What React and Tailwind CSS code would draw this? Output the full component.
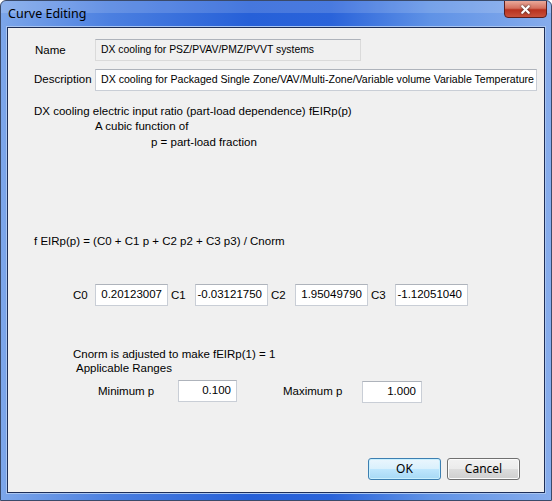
import { X } from 'lucide-react';

const font = { fontFamily: '"Liberation Sans", Arial, sans-serif' };

function Field({ value, className = '', align = 'left', disabled = false }) {
    return (
        <div
            className={`h-[22px] flex items-center px-[5px] border border-[#c9ced6] border-t-[#aeb3bb] text-black overflow-hidden ${
                disabled ? 'bg-[#f0f0f0]' : 'bg-white'
            } ${align === 'right' ? 'justify-end' : ''} ${className}`}
        >
            <span className="whitespace-nowrap">{value}</span>
        </div>
    );
}

function Coef({ label, value, labelW }) {
    return (
        <div className="flex items-center">
            <span className={`${labelW} text-[11.5px] pt-[2px]`}>{label}</span>
            <Field value={value} align="right" className="w-[73px] text-[11.5px]" />
        </div>
    );
}

export default function App() {
    return (
        <div className="w-[552px] h-[501px] bg-white" style={font}>
            <div className="w-[552px] h-[501px] flex flex-col rounded-t-[6px] border border-[#3a4a6a] bg-[linear-gradient(90deg,#7ca6ea_0%,#4b7fe0_20%,#2660d8_45%,#2a63da_60%,#5f92e6_78%,#86acec_100%)] overflow-hidden">
                {/* title bar */}
                <div className="h-[26px] flex items-start justify-between relative">
                    <div className="absolute inset-x-0 top-0 h-[12px] bg-white/15" />
                    <span className="ml-[7px] mt-[4px] text-[12.5px] text-black relative" style={{ fontFamily: '"Noto Sans", sans-serif' }}>
                        Curve Editing
                    </span>
                    <div className="relative mr-[4px] w-[43px] h-[18px] -mt-px rounded-b-[4px] border border-[#5a1f1f] bg-[linear-gradient(180deg,#e9a99a_0%,#d4705e_45%,#b8321f_55%,#c8513c_100%)] flex items-center justify-center">
                        <X size={13} strokeWidth={4} className="text-white drop-shadow-[0_0_1px_#333]" />
                    </div>
                </div>
                {/* body */}
                <div className="flex flex-1 px-[6px] pb-[7px]">
                    <div className="flex-1 border border-[#1d2e58] bg-[#f0f0f0] text-black text-[11.5px] outline outline-1 outline-[#a8c4f0]">
                        <div className="flex flex-col">
                            <div className="flex items-center mt-[11px] h-[22px]">
                                <span className="ml-[27px] w-[60px] pt-[2px]">Name</span>
                                <Field value="DX cooling for PSZ/PVAV/PMZ/PVVT systems" disabled className="w-[266px] border-[#dadada] text-[10.4px]" />
                            </div>
                            <div className="flex items-center mt-[8px] h-[22px]">
                                <span className="ml-[26px] w-[61px]">Description</span>
                                <Field value="DX cooling for Packaged Single Zone/VAV/Multi-Zone/Variable volume Variable Temperature" className="w-[442px] text-[10.6px]" />
                            </div>
                            <div className="mt-[13px] ml-[26px] h-[15px] leading-[15px]">DX cooling electric input ratio (part-load dependence) fEIRp(p)</div>
                            <div className="ml-[87px] h-[15px] leading-[15px]">A cubic function of</div>
                            <div className="ml-[143px] h-[16px] leading-[16px]">p = part-load fraction</div>
                            <div className="mt-[83px] ml-[26px] h-[16px] leading-[16px]">f EIRp(p) = (C0 + C1 p + C2 p2 + C3 p3) / Cnorm</div>
                            <div className="mt-[35px] ml-[65px] flex gap-[3px]">
                                <Coef label="C0" value="0.20123007" labelW="w-[22px]" />
                                <Coef label="C1" value="-0.03121750" labelW="w-[24px]" />
                                <Coef label="C2" value="1.95049790" labelW="w-[24px]" />
                                <Coef label="C3" value="-1.12051040" labelW="w-[24px]" />
                            </div>
                            <div className="mt-[41px] ml-[65px] h-[14px] leading-[14px]">Cnorm is adjusted to make fEIRp(1) = 1</div>
                            <div className="ml-[68px] h-[14px] leading-[14px]">Applicable Ranges</div>
                            <div className="mt-[4px] flex items-center">
                                <span className="ml-[90px] w-[80px] pt-[2px]">Minimum p</span>
                                <Field value="0.100" align="right" className="w-[59px] text-[11.5px]" />
                                <span className="ml-[46px] w-[79px] pt-[2px]">Maximum p</span>
                                <Field value="1.000" align="right" className="w-[60px] mt-[2px] text-[11.5px]" />
                            </div>
                            <div className="mt-[55px] ml-[360px] flex gap-[6px]">
                                <button className="w-[73px] h-[22px] rounded-[3px] border border-[#3c7fb1] bg-[linear-gradient(180deg,#eaf6fd_0%,#d9f0fc_50%,#bee6fd_51%,#a7d9f5_100%)] text-[12px] shadow-[inset_0_0_0_1px_#c9f0ff]" style={{ fontFamily: '"Noto Sans", sans-serif' }}>
                                    OK
                                </button>
                                <button className="w-[73px] h-[22px] rounded-[3px] border border-[#707070] bg-[linear-gradient(180deg,#f2f2f2_0%,#ebebeb_50%,#dddddd_51%,#cfcfcf_100%)] text-[12px] shadow-[inset_0_0_0_1px_#fcfcfc]" style={{ fontFamily: '"Noto Sans", sans-serif' }}>
                                    Cancel
                                </button>
                            </div>
                        </div>
                    </div>
                </div>
            </div>
        </div>
    );
}
